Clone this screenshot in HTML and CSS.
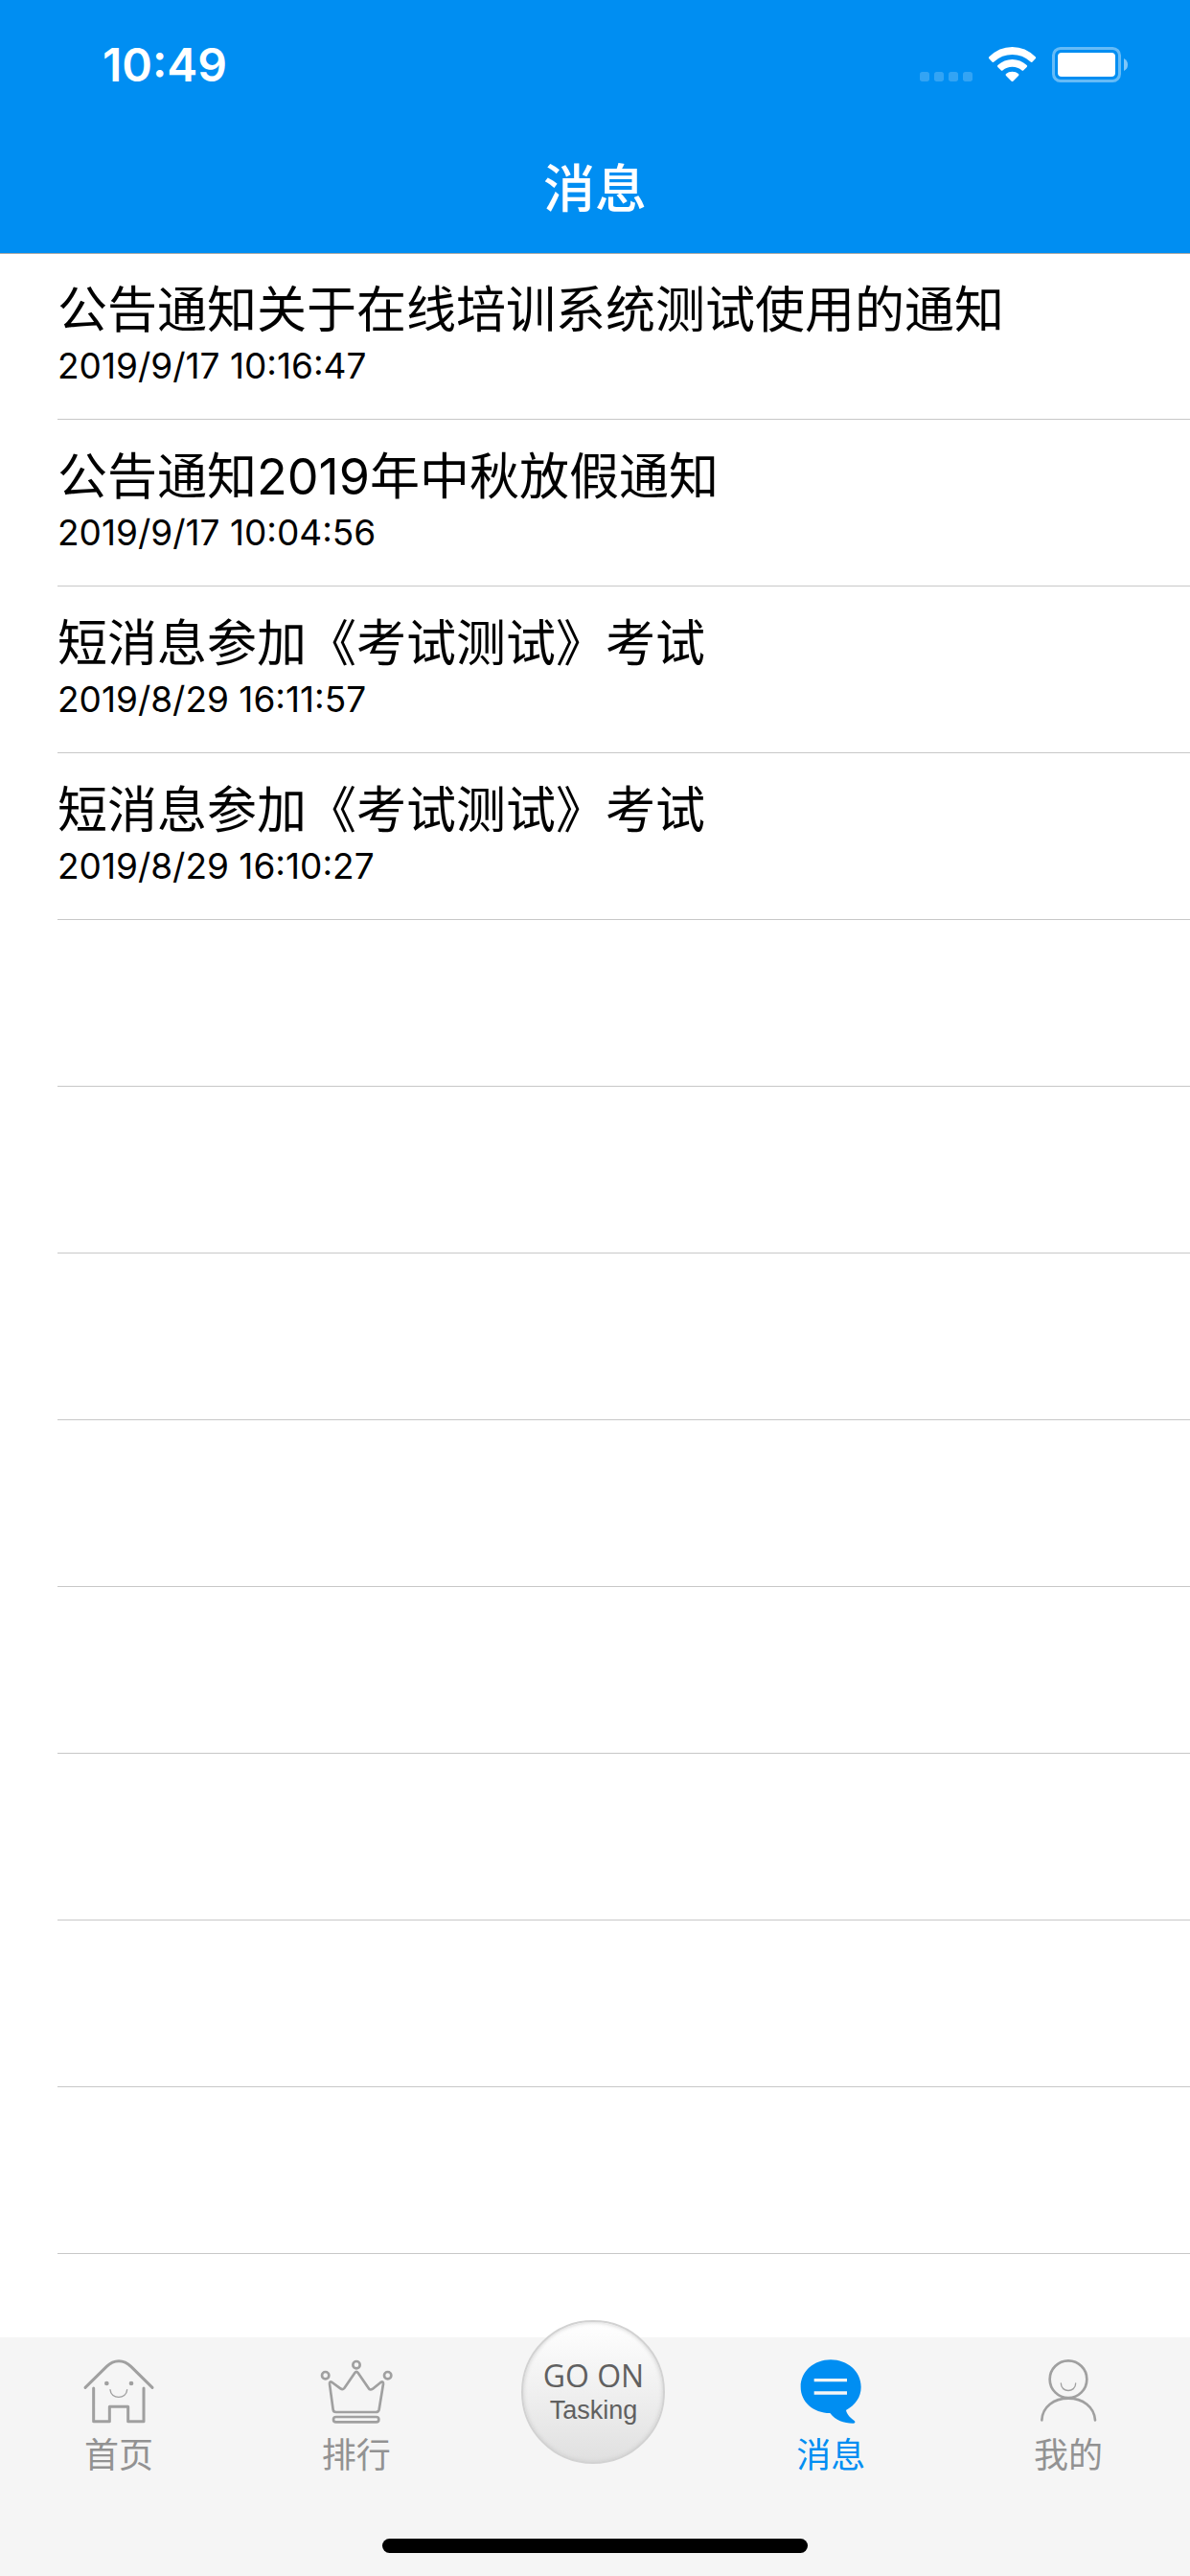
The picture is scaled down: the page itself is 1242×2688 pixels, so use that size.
FILE: index.html
```
<!DOCTYPE html>
<html lang="zh-CN">
<head>
	<meta charset="utf-8">
	<meta name="viewport" content="width=device-width, initial-scale=1">
	<title>消息</title>
	<link rel="stylesheet" href="styles.css">
</head>
<body>
	<header class="header">
		<div class="status-bar">
			<time class="clock">10:49</time>
			<svg class="status-icons" viewBox="117 84 657 114" aria-hidden="true">
				<!-- signal -->
				<g fill="#fff" opacity=".2">
					<rect x="120" y="165" width="30" height="30" rx="8"/>
					<rect x="165" y="165" width="30" height="30" rx="8"/>
					<rect x="210" y="165" width="30" height="30" rx="8"/>
					<rect x="255" y="165" width="30" height="30" rx="8"/>
				</g>
				<!-- wifi -->
				<g fill="#fff">
					<path d="M337 118Q368 87 409.500 87Q451 87 482 118Q485 121 482 124L472 134Q469 136 466 133Q442 111 409.500 111Q377 111 353 133Q350 136 347 134L337 124Q334 121 337 118Z"/>
					<path d="M364 144Q384 126 409.500 126Q435 126 455 144Q458 147 455 150L445 160Q442 163 439 160Q427 149 409.500 149Q392 149 380 160Q377 163 374 160L364 150Q361 147 364 144Z"/>
					<path d="M390 171Q398 164 409.500 164Q421 164 429 171Q432 174 429 177L412 194Q409.500 196 407 194L390 177Q387 174 390 171Z"/>
				</g>
				<!-- battery -->
				<rect x="538.500" y="91.500" width="207" height="102" rx="22" fill="none" stroke="#fff" stroke-width="9" opacity=".4"/>
				<rect x="552" y="105" width="180" height="75" rx="12" fill="#fff"/>
				<path d="M759 123Q771 129 771 142.500Q771 156 759 162Z" fill="#fff" opacity=".5"/>
			</svg>
		</div>
		<h1 class="header-title">消息</h1>
	</header>

	<main class="content">
		<ul class="message-list">
			<li class="message">
				<h2 class="message-title">公告通知关于在线培训系统测试使用的通知</h2>
				<p class="message-date">2019/9/17 10:16:47</p>
			</li>
			<li class="message">
				<h2 class="message-title">公告通知2019年中秋放假通知</h2>
				<p class="message-date">2019/9/17 10:04:56</p>
			</li>
			<li class="message">
				<h2 class="message-title">短消息参加《考试测试》考试</h2>
				<p class="message-date">2019/8/29 16:11:57</p>
			</li>
			<li class="message">
				<h2 class="message-title">短消息参加《考试测试》考试</h2>
				<p class="message-date">2019/8/29 16:10:27</p>
			</li>
			<!-- empty rows -->
			<li class="message"></li>
			<li class="message"></li>
			<li class="message"></li>
			<li class="message"></li>
			<li class="message"></li>
			<li class="message"></li>
			<li class="message"></li>
			<li class="message"></li>
		</ul>
	</main>

	<footer class="footer">
		<nav class="tabs">
			<a class="tab" href="#home">
				<svg class="tab-icon" viewBox="109 124 228 204" aria-hidden="true">
					<g fill="none" stroke="#a0a0a0" stroke-width="9" stroke-linecap="round" stroke-linejoin="round">
						<path d="M118 215L185 149Q202 132 223 132Q244 132 261 149L328 215"/>
						<path d="M144 217V321H194V275H252V321H301V217"/>
						<path d="M196 222C198 253 247 253 249 222" stroke-width="4"/>
					</g>
					<circle cx="185" cy="202" r="7" fill="#a0a0a0"/>
					<circle cx="262" cy="202" r="7" fill="#a0a0a0"/>
				</svg>
				<span class="tab-label">首页</span>
			</a>
			<a class="tab" href="#rank">
				<svg class="tab-icon" viewBox="853 124 228 204" aria-hidden="true">
					<g fill="none" stroke="#a0a0a0" stroke-width="8" stroke-linejoin="round">
						<circle cx="967" cy="144" r="11"/>
						<circle cx="870" cy="177" r="11"/>
						<circle cx="1065" cy="177" r="11"/>
						<path d="M891 199L917 218Q924 223 929 217L962 169Q967 162 972 169L1005 217Q1010 225 1018 219L1043 199Q1052 194 1051 204L1038 284Q1036 292 1028 292H903Q895 292 894 284L883 204Q882 194 891 199Z"/>
						<rect x="895" y="307" width="142" height="16" rx="8"/>
					</g>
				</svg>
				<span class="tab-label">排行</span>
			</a>
			<div class="tab-center">
				<button class="go-button" type="button">
					<span class="go-title">GO ON</span>
					<span class="go-text">Tasking</span>
				</button>
			</div>
			<a class="tab active" href="#message" aria-current="page">
				<svg class="tab-icon" viewBox="148 94 228 204" aria-hidden="true">
					<path d="M262 98C314 98 357 134 357 183C357 215 339 239 310 256C313 270 324 280 337 290Q341 297 332 297C302 297 278 288 260 265C207 264 168 230 168 183C168 134 210 98 262 98Z" fill="#008ef2"/>
					<path d="M210 162H313M210 202H313" stroke="#f5f5f5" stroke-width="10"/>
				</svg>
				<span class="tab-label">消息</span>
			</a>
			<a class="tab" href="#mine">
				<svg class="tab-icon" viewBox="893 94 228 204" aria-hidden="true">
					<g fill="none" stroke="#a0a0a0" stroke-width="8" stroke-linecap="round">
						<circle cx="1007" cy="159" r="58"/>
						<path d="M924 287C926 245 962 219 1007 219C1052 219 1088 245 1091 287"/>
						<path d="M984 172C984 202 1030 202 1030 172" stroke-width="4"/>
					</g>
				</svg>
				<span class="tab-label">我的</span>
			</a>
		</nav>
		<div class="home-indicator"></div>
	</footer>
</body>
</html>
```
FILE: styles.css
```
* {
	box-sizing: border-box;
}

body {
	display: flex;
	flex-direction: column;
	min-height: 100vh;
	margin: 0;
	background: #fff;
	color: #000;
	font-family: Inter, "Noto Sans CJK SC", sans-serif;
}

h1, h2, p, ul {
	margin: 0;
	padding: 0;
	font-weight: 400;
}

ul {
	list-style: none;
}

.header {
	background: #008ef2;
	box-shadow: 0 1px 0 #a8a8a8;
	color: #fff;
}

.status-bar {
	display: flex;
	align-items: center;
	justify-content: space-between;
	height: 134px;
	padding: 0 64px 0 107px;
}

.clock {
	font-size: 48px;
	font-weight: 600;
}

.status-icons {
	width: 219px;
	height: 38px;
}

.header-title {
	height: 130px;
	font-size: 54px;
	font-weight: 500;
	line-height: 128px;
	text-align: center;
}

.content {
	flex: 1;
}

.message {
	height: 174px;
	margin-left: 60px;
	padding-top: 30px;
	border-bottom: 1px solid #c8c8c8;
}

.message-title {
	font-size: 52px;
	line-height: 60px;
}

.message-date {
	margin-top: 6px;
	font-size: 37px;
	line-height: 44px;
}

.footer {
	padding-bottom: 24px;
	background: #f5f5f5;
}

.tabs {
	display: flex;
	padding-right: 3px;
}

.tab {
	display: flex;
	flex: 1;
	flex-direction: column;
	align-items: center;
	gap: 8px;
	padding-top: 22px;
	color: #929292;
	text-decoration: none;
}

.tab.active {
	color: #008ef2;
}

.tab-icon {
	width: 76px;
	height: 68px;
}

.tab-label {
	font-size: 36px;
	line-height: 50px;
}

.tab-center {
	flex: 1;
}

/* round button rises above the bar */
.go-button {
	display: flex;
	flex-direction: column;
	align-items: center;
	justify-content: center;
	width: 150px;
	height: 150px;
	margin: -18px auto 0;
	padding: 0;
	border: 2px solid #d2d2d2;
	border-radius: 50%;
	background: linear-gradient(#fff, #e0e0e0);
	box-shadow: inset 0 0 4px #ccc;
	color: #606060;
}

.go-title {
	font-family: "Open Sans", sans-serif;
	font-size: 32px;
	font-weight: 500;
	line-height: 38px;
}

.go-text {
	font-family: "Liberation Sans", sans-serif;
	font-size: 27px;
	line-height: 34px;
}

.home-indicator {
	width: 444px;
	height: 15px;
	margin: 62px auto 0;
	border-radius: 8px;
	background: #000;
}
```
